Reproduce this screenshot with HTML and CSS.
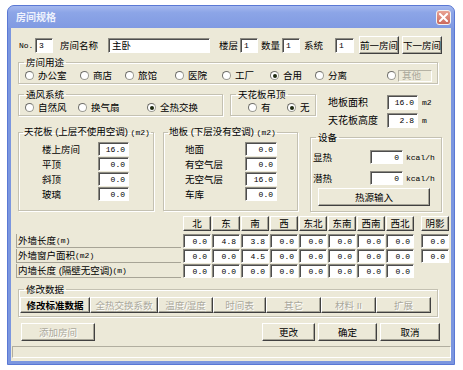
FILE: index.html
```html
<!DOCTYPE html>
<html lang="zh-CN">
<head>
  <meta charset="UTF-8" />
  <title>房间规格</title>
  <link rel="stylesheet" href="styles.css">
</head>
<body>

  <div class="window">
    <div class="titlebar">
      <span class="title">房间规格</span>
      <span class="close">
        <svg width="9" height="9" viewBox="0 0 9 9"><path d="M1 1L8 8M8 1L1 8" stroke="#fff" stroke-width="2" stroke-linecap="square"/></svg>
      </span>
    </div>

    <div class="client">

      <div class="row-top">
        <span class="lat lbl-no">No.</span>
        <span class="field f-no lat">3</span>
        <span class="lbl-name">房间名称</span>
        <span class="field f-name">主卧</span>
        <span class="lbl-floor">楼层</span>
        <span class="field f-small lat">1</span>
        <span class="lbl-count">数量</span>
        <span class="field f-small lat">1</span>
        <span class="lbl-sys">系统</span>
        <span class="field f-sys lat">1</span>
        <button class="btn btn-nav">前一房间</button>
        <button class="btn btn-nav btn-next">下一房间</button>
      </div>

      <fieldset class="grp g-use">
        <legend>房间用途</legend>
        <div class="radios">
          <span class="opt o1"><i class="rb"></i>办公室</span>
          <span class="opt o2"><i class="rb"></i>商店</span>
          <span class="opt o3"><i class="rb"></i>旅馆</span>
          <span class="opt o4"><i class="rb"></i>医院</span>
          <span class="opt o5"><i class="rb"></i>工厂</span>
          <span class="opt o6"><i class="rb on"></i>合用</span>
          <span class="opt o7"><i class="rb"></i>分离</span>
          <span class="opt"><i class="rb"></i><span class="other">其他</span></span>
        </div>
      </fieldset>

      <div class="mid">
        <div class="mid-left">
          <div class="mid-row">
            <fieldset class="grp g-vent">
              <legend>通风系统</legend>
              <div class="radios">
                <span class="opt v1"><i class="rb"></i>自然风</span>
                <span class="opt v2"><i class="rb"></i>换气扇</span>
                <span class="opt"><i class="rb on"></i>全热交换</span>
              </div>
            </fieldset>
            <fieldset class="grp g-hang">
              <legend>天花板吊顶</legend>
              <div class="radios">
                <span class="opt h1"><i class="rb"></i>有</span>
                <span class="opt"><i class="rb on"></i>无</span>
              </div>
            </fieldset>
          </div>

          <div class="mid-row row-area">
            <fieldset class="grp g-ceil">
              <legend>天花板 (上层不使用空调) <span class="lat">(m2)</span></legend>
              <div class="vals">
                <span class="vl">楼上房间</span><span class="field num">16.0</span>
                <span class="vl">平顶</span><span class="field num">0.0</span>
                <span class="vl">斜顶</span><span class="field num">0.0</span>
                <span class="vl">玻璃</span><span class="field num">0.0</span>
              </div>
            </fieldset>
            <fieldset class="grp g-floor">
              <legend>地板 (下层没有空调) <span class="lat">(m2)</span></legend>
              <div class="vals">
                <span class="vl">地面</span><span class="field num">0.0</span>
                <span class="vl">有空气层</span><span class="field num">0.0</span>
                <span class="vl">无空气层</span><span class="field num">16.0</span>
                <span class="vl">车库</span><span class="field num">0.0</span>
              </div>
            </fieldset>
          </div>
        </div>

        <div class="mid-right">
          <div class="size-row">
            <span class="size-lbl">地板面积</span>
            <span class="field num f-size">16.0</span>
            <span class="lat unit">m2</span>
          </div>
          <div class="size-row size-row2">
            <span class="size-lbl">天花板高度</span>
            <span class="field num f-size">2.8</span>
            <span class="lat unit">m</span>
          </div>

          <fieldset class="grp g-equip">
            <legend>设备</legend>
            <div class="eq-row">
              <span class="eq-lbl">显热</span>
              <span class="field num f-eq">0</span>
              <span class="lat unit">kcal/h</span>
            </div>
            <div class="eq-row">
              <span class="eq-lbl">潜热</span>
              <span class="field num f-eq">0</span>
              <span class="lat unit">kcal/h</span>
            </div>
            <button class="btn btn-heat">热源输入</button>
          </fieldset>
        </div>
      </div>

      <div class="walls">
        <span></span>
        <span class="btn hd">北</span>
        <span class="btn hd">东</span>
        <span class="btn hd">南</span>
        <span class="btn hd">西</span>
        <span class="btn hd">东北</span>
        <span class="btn hd">东南</span>
        <span class="btn hd">西南</span>
        <span class="btn hd">西北</span>
        <span class="btn hd shade">阴影</span>

        <span class="wl">外墙长度 <span class="lat">(m)</span></span>
        <span class="field num cell">0.0</span>
        <span class="field num cell">4.8</span>
        <span class="field num cell">3.8</span>
        <span class="field num cell">0.0</span>
        <span class="field num cell">0.0</span>
        <span class="field num cell">0.0</span>
        <span class="field num cell">0.0</span>
        <span class="field num cell">0.0</span>
        <span class="field num cell shade">0.0</span>

        <span class="wl">外墙窗户面积 <span class="lat">(m2)</span></span>
        <span class="field num cell">0.0</span>
        <span class="field num cell">0.0</span>
        <span class="field num cell">4.5</span>
        <span class="field num cell">0.0</span>
        <span class="field num cell">0.0</span>
        <span class="field num cell">0.0</span>
        <span class="field num cell">0.0</span>
        <span class="field num cell">0.0</span>
        <span class="field num cell shade">0.0</span>

        <span class="wl">内墙长度 (隔壁无空调) <span class="lat">(m)</span></span>
        <span class="field num cell">0.0</span>
        <span class="field num cell">0.0</span>
        <span class="field num cell">0.0</span>
        <span class="field num cell">0.0</span>
        <span class="field num cell">0.0</span>
        <span class="field num cell">0.0</span>
        <span class="field num cell">0.0</span>
        <span class="field num cell">0.0</span>
      </div>

      <fieldset class="grp g-edit">
        <legend>修改数据</legend>
        <div class="tabs">
          <button class="btn tab t-std">修改标准数据</button>
          <button class="btn tab t-xchg off">全热交换系数</button>
          <button class="btn tab t-temp off">温度/湿度</button>
          <button class="btn tab t-time off">时间表</button>
          <button class="btn tab t-misc off">其它</button>
          <button class="btn tab t-misc off">材料 II</button>
          <button class="btn tab t-misc off">扩展</button>
        </div>
      </fieldset>

      <div class="actions">
        <button class="btn b-add off">添加房间</button>
        <button class="btn b-change">更改</button>
        <button class="btn b-ok">确定</button>
        <button class="btn b-cancel">取消</button>
      </div>

      <div class="status"></div>
    </div>
  </div>

</body>
</html>
```

FILE: styles.css
```css
* {
  margin: 0;
  padding: 0;
  box-sizing: border-box;
}

body {
  background-color: #fff;
  font-family: "Liberation Sans", "Noto Sans CJK SC", sans-serif;
  font-size: 9.5px;
  line-height: 11px;
  color: #000;
}

.lat {
  font-family: "Liberation Mono", monospace;
  font-size: 8px;
}

/* window frame */

.window {
  margin: 5px 0 0 7px;
  width: 448px;
  height: 360px;
  display: flex;
  flex-direction: column;
  background-color: #7b96df;
  border: 1px solid #5a78d4;
  border-radius: 7px 7px 0 0;
  padding: 0 3px 3px 3px;
}

.titlebar {
  height: 22px;
  display: flex;
  align-items: center;
  justify-content: space-between;
  background: linear-gradient(#a5b8ee, #8ca5e7 30%, #809ae2);
  margin: 0 -3px;
  padding: 0 3px 0 8px;
  border-radius: 6px 6px 0 0;
}

.title {
  color: #eef2fd;
  font-weight: 700;
  font-size: 10px;
}

.close {
  width: 15px;
  height: 15px;
  display: flex;
  align-items: center;
  justify-content: center;
  border: 1px solid #f2f2f2;
  border-radius: 3px;
  background: linear-gradient(#e9a394, #cc6a5c);
}

.client {
  flex: 1;
  background-color: #ece9d8;
  padding-top: 8px;
}

/* common controls */

.field {
  display: inline-flex;
  align-items: center;
  background-color: #fff;
  border-top: 1px solid #8d8b82;
  border-left: 1px solid #8d8b82;
  border-right: 1px solid #fff;
  border-bottom: 1px solid #fff;
  box-shadow: inset 1px 1px 0 #4d4d4d;
  padding-left: 3px;
  height: 15px;
  white-space: nowrap;
}

.num {
  justify-content: flex-end;
  padding: 0 3px 0 0;
  font-family: "Liberation Mono", monospace;
  font-size: 8px;
}

.btn {
  display: inline-flex;
  align-items: center;
  justify-content: center;
  font-family: inherit;
  font-size: 9.5px;
  color: #000;
  background-color: #ece9d8;
  border-top: 1px solid #fff;
  border-left: 1px solid #fff;
  border-right: 1px solid #404040;
  border-bottom: 1px solid #404040;
  box-shadow: inset -1px -1px 0 #a6a497;
  white-space: nowrap;
}

.btn.off {
  color: #aaa89c;
  text-shadow: 1px 1px 0 #fff;
}

.grp {
  border: 1px solid #c4c1b2;
  box-shadow: inset 1px 1px 0 #fff, 1px 1px 0 #fff;
  padding: 0;
  min-width: 0;
}

.grp legend {
  margin-left: 5px;
  padding: 0 2px;
  line-height: 11px;
  white-space: nowrap;
}

.g-ceil legend,
.g-floor legend {
  margin-left: 4px;
  padding: 0 1px;
}

.radios {
  display: flex;
  align-items: center;
  height: 13px;
  margin-top: 1px;
}

.opt {
  display: inline-flex;
  align-items: center;
  gap: 4px;
  white-space: nowrap;
}

.rb {
  width: 9px;
  height: 9px;
  border-radius: 50%;
  background-color: #fff;
  border: 1px solid #9a9a92;
  border-top-color: #6f6f6a;
  border-left-color: #6f6f6a;
  display: inline-flex;
  align-items: center;
  justify-content: center;
}

.rb.on::after {
  content: "";
  width: 4px;
  height: 4px;
  border-radius: 50%;
  background-color: #1e2a10;
}

/* top row */

.row-top {
  display: flex;
  align-items: center;
  height: 18px;
  margin-left: 8px;
}

.lbl-no { width: 16px; }
.f-no { width: 18px; }
.lbl-name { margin-left: 7px; width: 48px; }
.f-name { width: 102px; }
.lbl-floor { margin-left: 9px; width: 21px; }
.f-small { width: 18px; }
.lbl-count { margin-left: 3px; width: 21px; }
.lbl-sys { margin-left: 4px; width: 31px; }
.f-sys { width: 19px; }

.btn-nav {
  margin-left: 5px;
  width: 40px;
  height: 18px;
}

.btn-next { margin-left: 3px; }

/* room use */

.g-use {
  margin: 3px 0 0 7px;
  width: 420px;
  height: 27px;
}

.o1 { margin-left: 6px; width: 55px; }
.o2 { width: 45px; }
.o3 { width: 50px; }
.o4 { width: 47px; }
.o5 { width: 48px; }
.o6 { width: 45px; }
.o7 { width: 72px; }

.other {
  width: 34px;
  height: 12px;
  display: inline-flex;
  align-items: center;
  padding-left: 3px;
  color: #aaa89c;
  border: 1px solid #b5b2a4;
  border-right-color: #fff;
  border-bottom-color: #fff;
  margin-left: -2px;
}

/* middle block */

.mid {
  display: flex;
  margin-top: 5px;
}

.mid-left {
  margin-left: 7px;
  width: 298px;
}

.mid-row {
  display: flex;
}

.g-vent {
  width: 205px;
  height: 27px;
}

.v1 { margin-left: 6px; width: 53px; }
.v2 { width: 69px; }

.g-hang {
  margin-left: 7px;
  width: 86px;
  height: 27px;
}

.h1 { margin-left: 17px; width: 39px; }

.row-area {
  margin-top: 10px;
}

.g-ceil {
  width: 136px;
  height: 85px;
}

.g-floor {
  margin-left: 9px;
  width: 135px;
  height: 85px;
}

.vals {
  display: grid;
  grid-template-columns: 56px 31px;
  grid-auto-rows: 15px;
  margin: 4px 0 0 23px;
}

.vals .field {
  height: 14px;
}

.vl {
  display: flex;
  align-items: center;
}

.g-floor .vals {
  grid-template-columns: 60px 32px;
  margin-left: 21px;
}

.mid-right {
  width: 135px;
}

.size-row {
  display: flex;
  align-items: center;
  margin: 6px 0 0 12px;
  height: 15px;
}

.size-row2 {
  margin-top: 3px;
}

.size-lbl {
  width: 59px;
  font-size: 10px;
}

.f-size {
  width: 31px;
}

.unit {
  margin-left: 4px;
}

.g-equip {
  margin: 4px 0 0 -6px;
  width: 132px;
  height: 80px;
}

.eq-row {
  display: flex;
  align-items: center;
  height: 14px;
  margin: 7px 0 0 2px;
}

.eq-row + .eq-row {
  margin-top: 7px;
}

.eq-lbl {
  width: 57px;
}

.f-eq {
  width: 33px;
  height: 14px;
}

.eq-row .unit {
  margin-left: 3px;
}

.btn-heat {
  margin: 3px 0 0 7px;
  width: 112px;
  height: 18px;
}

/* walls table */

.walls {
  display: grid;
  grid-template-columns: 167px repeat(8, 29px) 6px 29px;
  grid-template-rows: 18px 15px 15px 15px;
  margin: 4px 0 0 5px;
}

.hd {
  width: 28px;
  height: 15px;
}

.cell {
  width: 28px;
  height: 14px;
}

.shade {
  grid-column: 11;
}

.wl {
  display: flex;
  align-items: center;
  height: 14px;
  border-bottom: 1px solid #a7a496;
  border-left: 1px solid #a7a496;
  padding-left: 1px;
  margin-right: 2px;
}

/* edit data */

.g-edit {
  margin: 5px 0 0 7px;
  width: 420px;
  height: 33px;
}

.tabs {
  display: flex;
  margin: 2px 0 0 1px;
}

.tab {
  height: 16px;
  width: 55px;
}

.t-std { width: 70px; font-weight: 700; }
.t-xchg { width: 68px; }
.t-time { width: 53px; }

/* bottom buttons */

.actions {
  display: flex;
  margin: 6px 0 0 10px;
}

.actions .btn {
  height: 18px;
}

.b-add { width: 74px; }
.b-change { margin-left: 167px; width: 53px; }
.b-ok { margin-left: 3px; width: 59px; }
.b-cancel { margin-left: 3px; width: 60px; }

.status {
  margin: 5px 0 0 1px;
  height: 12px;
  border: 1px solid #b1ae9f;
  border-right-color: #fff;
  border-bottom-color: #fff;
}
```
